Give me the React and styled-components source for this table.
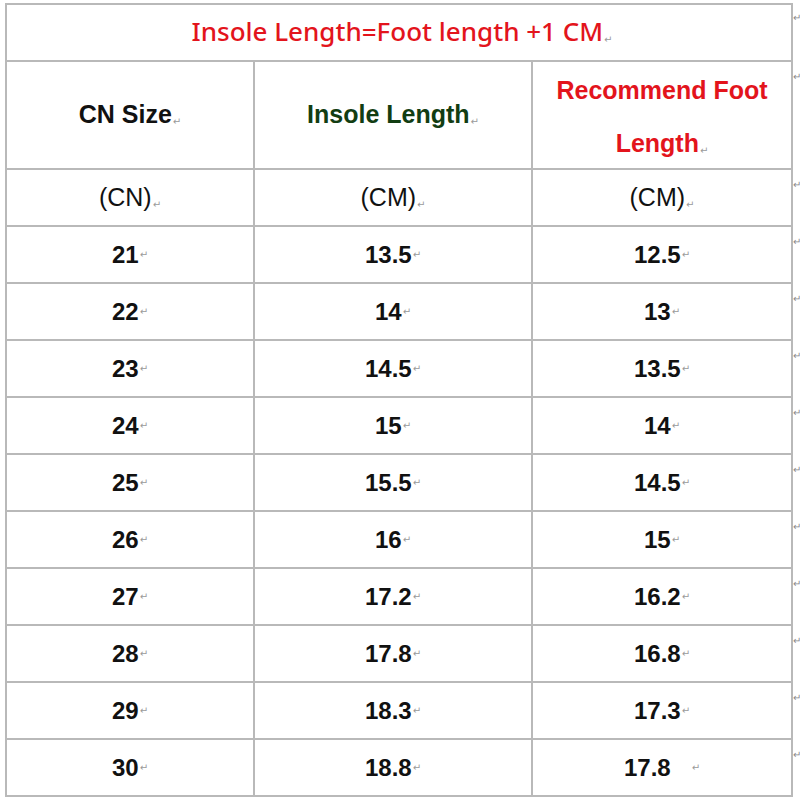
import React from "react";
import styled, { createGlobalStyle } from "styled-components";

const GlobalStyle = createGlobalStyle`
  html, body {
    margin: 0;
    padding: 0;
    background: #ffffff;
  }
  body {
    font-family: "Liberation Sans", Arial, sans-serif;
  }
`;

const rows = [
  { cn: "21", insole: "13.5", foot: "12.5" },
  { cn: "22", insole: "14", foot: "13" },
  { cn: "23", insole: "14.5", foot: "13.5" },
  { cn: "24", insole: "15", foot: "14" },
  { cn: "25", insole: "15.5", foot: "14.5" },
  { cn: "26", insole: "16", foot: "15" },
  { cn: "27", insole: "17.2", foot: "16.2" },
  { cn: "28", insole: "17.8", foot: "16.8" },
  { cn: "29", insole: "18.3", foot: "17.3" },
  { cn: "30", insole: "18.8", foot: "17.8\u00a0\u00a0\u00a0" },
];

const App = () => {
  return (
    <Page>
      <GlobalStyle />
      <Table>
        <Cell span={3} height={59} first top>
          <Title>
            Insole Length=Foot length +1 CM<Return />
          </Title>
        </Cell>
        <RowMark />

        <Cell height={108} first>
          <HeadText>
            CN Size<Return />
          </HeadText>
        </Cell>
        <Cell height={108}>
          <HeadText color="#123d12">
            Insole Length<Return />
          </HeadText>
        </Cell>
        <Cell height={108}>
          <HeadText color="#e3141c" lines>
            Recommend Foot
            <br />
            Length<Return />
          </HeadText>
        </Cell>
        <RowMark />

        <Cell first>
          <UnitText>
            (CN)<Return />
          </UnitText>
        </Cell>
        <Cell>
          <UnitText>
            (CM)<Return />
          </UnitText>
        </Cell>
        <Cell>
          <UnitText>
            (CM)<Return />
          </UnitText>
        </Cell>
        <RowMark />

        {rows.map(r => (
          <React.Fragment key={r.cn}>
            <Cell first>
              <Value>{r.cn}</Value>
              <Return />
            </Cell>
            <Cell>
              <Value>{r.insole}</Value>
              <Return />
            </Cell>
            <Cell>
              <Value>{r.foot}</Value>
              <Return />
            </Cell>
            <RowMark />
          </React.Fragment>
        ))}
      </Table>
    </Page>
  );
};

const Return = () => <ReturnMark>↵</ReturnMark>;

export default App;

const Page = styled.div`
  width: 800px;
  height: 800px;
  overflow: hidden;
  padding: 3px 0 0 5px;
  box-sizing: border-box;
  background: #ffffff;
`;

const Table = styled.div`
  display: grid;
  grid-template-columns: 250px 278px 260px 7px;
`;

const Cell = styled.div`
  grid-column: span ${props => props.span || 1};
  height: ${props => props.height || 57}px;
  box-sizing: border-box;
  border-right: 2px solid #b9b9b9;
  border-bottom: 2px solid #b9b9b9;
  border-left: ${props => (props.first ? "2px solid #b9b9b9" : "none")};
  border-top: ${props => (props.top ? "2px solid #b9b9b9" : "none")};
  display: flex;
  align-items: center;
  justify-content: center;
  text-align: center;
  color: #111111;
`;

const RowMark = styled.div`
  display: flex;
  justify-content: center;
  padding-top: 10px;
  font-size: 10px;
  line-height: 10px;
  color: #8a8a8a;
  &::before {
    content: "↵";
  }
`;

const ReturnMark = styled.span`
  font-family: "DejaVu Sans", sans-serif;
  font-size: 10px;
  font-weight: 400;
  color: #9a9a9a;
  margin-left: 1px;
  vertical-align: -2px;
`;

const Title = styled.div`
  font-family: "Noto Sans", "Open Sans", sans-serif;
  font-weight: 500;
  font-size: 26px;
  color: #e3141c;
  padding-left: 6px;
  margin-top: -3px;
`;

const HeadText = styled.div`
  font-weight: 700;
  font-size: 25px;
  line-height: ${props => (props.lines ? "53px" : "28px")};
  color: ${props => props.color || "#111111"};
  margin-top: ${props => (props.lines ? "10px" : "6px")};
`;

const UnitText = styled.div`
  font-size: 25px;
  color: #111111;
`;

const Value = styled.span`
  font-weight: 700;
  font-size: 24px;
  color: #111111;
`;
